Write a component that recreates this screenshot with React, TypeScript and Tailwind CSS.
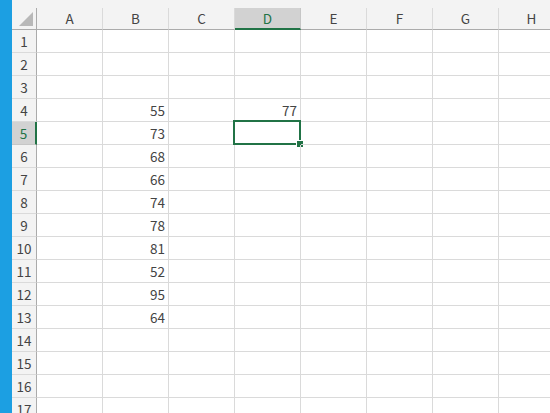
import React from "react";

const cols = ["A", "B", "C", "D", "E", "F", "G", "H"];
const values: Record<number, Record<string, string>> = {
  4: { B: "55", D: "77" },
  5: { B: "73" },
  6: { B: "68" },
  7: { B: "66" },
  8: { B: "74" },
  9: { B: "78" },
  10: { B: "81" },
  11: { B: "52" },
  12: { B: "95" },
  13: { B: "64" },
};
const rows = Array.from({ length: 17 }, (_, i) => i + 1);

function ColHeader({ name }: { name: string }) {
  const active = name === "D";
  return (
    <div
      className={
        active
          ? "w-[66px] shrink-0 h-full flex items-center justify-center bg-[#d2d2d2] border-r border-[#c6c6c6] border-b-2 border-b-[#217346] text-[#217346]"
          : "w-[66px] shrink-0 h-full flex items-center justify-center bg-[#f3f3f3] border-r border-[#dadada] border-b border-b-[#ababab] text-[#444]"
      }
    >
      {name}
    </div>
  );
}

function Row({ n }: { n: number }) {
  const active = n === 5;
  return (
    <div className="flex h-[23px] shrink-0">
      <div
        className={
          active
            ? "w-[25px] shrink-0 flex items-center justify-center bg-[#d2d2d2] border-b border-[#c6c6c6] border-r-2 border-r-[#217346] text-[#217346]"
            : "w-[25px] shrink-0 flex items-center justify-center bg-[#f3f3f3] border-b border-[#dadada] border-r border-r-[#ababab] text-[#444]"
        }
      >
        {n}
      </div>
      {cols.map((c) => {
        const selected = n === 5 && c === "D";
        return (
          <div
            key={c}
            className="relative w-[66px] shrink-0 border-r border-b border-[#dadada] flex items-center justify-end pr-[3px] text-[#444]"
          >
            {values[n]?.[c]}
            {selected && (
              <div className="absolute -left-[2px] -top-[2px] w-[68px] h-[25px] border-2 border-[#217346]">
                <div className="absolute -right-[5px] -bottom-[5px] w-[8px] h-[8px] bg-[#217346] border border-white" />
              </div>
            )}
          </div>
        );
      })}
    </div>
  );
}

export default function App() {
  return (
    <div
      className="flex w-[550px] h-[413px] overflow-hidden bg-white text-[13.5px]"
      style={{ fontFamily: '"Noto Sans CJK JP", "Open Sans", sans-serif' }}
    >
      <div className="w-[12px] shrink-0 bg-[#1c9fe2]" />
      <div className="flex flex-col flex-1 overflow-hidden">
        <div className="h-[8px] shrink-0 bg-[#f3f3f3]" />
        <div className="flex h-[22px] shrink-0">
          <div className="w-[25px] shrink-0 relative bg-[#f3f3f3] border-r border-b border-[#ababab]">
            <svg className="absolute right-[3px] bottom-[3px]" width="14" height="14" viewBox="0 0 14 14">
              <polygon points="14,0 14,14 0,14" fill="#b8b8b8" />
            </svg>
          </div>
          {cols.map((c) => (
            <ColHeader key={c} name={c} />
          ))}
        </div>
        {rows.map((n) => (
          <Row key={n} n={n} />
        ))}
      </div>
    </div>
  );
}
